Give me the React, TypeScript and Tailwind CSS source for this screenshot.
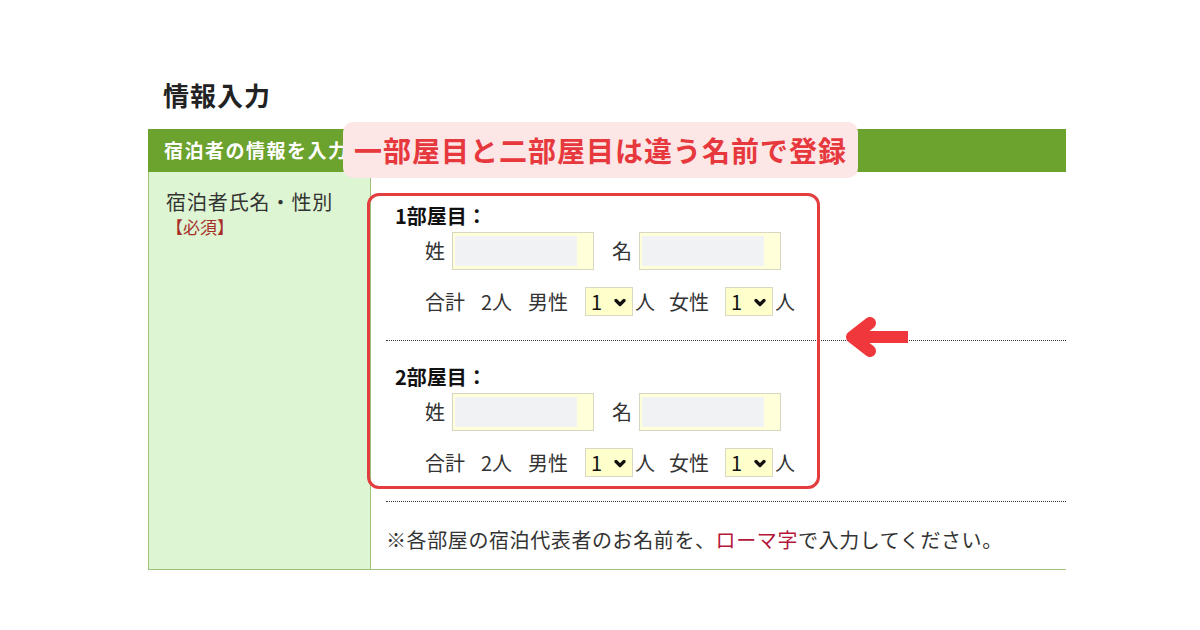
import React from "react";

const jp = { fontFamily: '"Noto Sans CJK JP", "Noto Sans", sans-serif' };

function NameInput() {
  return (
    <div className="flex h-[38px] w-[142px] border border-[#d6d6c2] bg-[#ffffd9] py-[3px] pl-[2px] pr-[16px]">
      <div className="h-full w-full bg-[#f1f2f4]" />
    </div>
  );
}

function CountSelect() {
  return (
    <div className="flex h-[29px] w-[48px] items-center justify-between border border-[#d8d8c4] bg-[#ffffcc] pl-[5px] pr-[6px]">
      <span className="text-[20px] leading-none text-[#111]">1</span>
      <svg width="12" height="9" viewBox="0 0 12 9" className="mt-[2px]">
        <polyline points="2,2.5 6,6.5 10,2.5" fill="none" stroke="#111" strokeWidth="3.2" strokeLinejoin="round" strokeLinecap="round" />
      </svg>
    </div>
  );
}

function Room({ label, first }: { label: string; first?: boolean }) {
  return (
    <div className={`${first ? "pt-[32px]" : "pt-[24px]"} pb-[24px] border-b border-dotted border-[#333]`}>
      <div className="ml-[9px] h-[24px] text-[20px] font-bold leading-[24px] text-[#111]">{label}</div>
      <div className="ml-[39px] mt-[4px] flex items-center text-[20px] text-[#333]">
        <span>姓</span>
        <div className="ml-[7px]">
          <NameInput />
        </div>
        <span className="ml-[18px]">名</span>
        <div className="ml-[7px]">
          <NameInput />
        </div>
      </div>
      <div className="ml-[39px] mt-[17px] flex h-[29px] items-center text-[20px] text-[#333]">
        <span>合計</span>
        <span className="ml-[16px]">2人</span>
        <span className="ml-[16px]">男性</span>
        <div className="ml-[17px]">
          <CountSelect />
        </div>
        <span className="ml-[2px]">人</span>
        <span className="ml-[14px]">女性</span>
        <div className="ml-[16px]">
          <CountSelect />
        </div>
        <span className="ml-[2px]">人</span>
      </div>
    </div>
  );
}

export default function App() {
  return (
    <div style={jp} className="relative h-[630px] w-[1200px] overflow-hidden bg-white">
      <div className="pl-[148px] pt-[81px]">
        <h1 className="pl-[15px] text-[26px] font-bold leading-[28px] tracking-[1px] text-[#222]">情報入力</h1>

        <div className="mt-[20px] w-[918px]">
          <div className="flex h-[43px] items-center bg-[#6ca22e] pl-[16px] text-[19px] font-bold tracking-[1.5px] text-white">
            宿泊者の情報を入力
          </div>
          <div className="flex h-[398px] border-b border-[#9cc27c]">
            <div className="w-[223px] border-x border-[#9cc27c] bg-[#ddf5d2] pl-[17px] pt-[18px]">
              <div className="text-[20px] leading-[24px] tracking-[0.9px] text-[#333]">宿泊者氏名・性別</div>
              <div className="mt-[2px] text-[17px] leading-[22px] text-[#a8302a]">【必須】</div>
            </div>
            <div className="flex-1 pl-[15px]">
              <Room label="1部屋目：" first />
              <Room label="2部屋目：" />
              <div className="pt-[26px] text-[20px] leading-[24px] tracking-[0.6px] text-[#333]">
                ※各部屋の宿泊代表者のお名前を、<span className="text-[#b3173a]">ローマ字</span>で入力してください。
              </div>
            </div>
          </div>
        </div>
      </div>

      {/* annotation overlays */}
      <div className="absolute left-[343px] top-[122px] flex h-[56px] w-[515px] items-center justify-center rounded-[10px] bg-[#fde6e6] text-[28px] font-bold tracking-[1px] text-[#e6383d]">
        一部屋目と二部屋目は違う名前で登録
      </div>
      <div className="absolute left-[367px] top-[193px] h-[296px] w-[453px] rounded-[12px] border-[3px] border-[#e33d3f]" />
      <svg className="absolute left-[840px] top-[316px]" width="75" height="44" viewBox="0 0 75 44">
        <path d="M68 21 H14" stroke="#f0373c" strokeWidth="12" fill="none" />
        <polyline points="30,7 12,21 30,35" fill="none" stroke="#f0373c" strokeWidth="12" strokeLinejoin="round" strokeLinecap="round" />
      </svg>
    </div>
  );
}
